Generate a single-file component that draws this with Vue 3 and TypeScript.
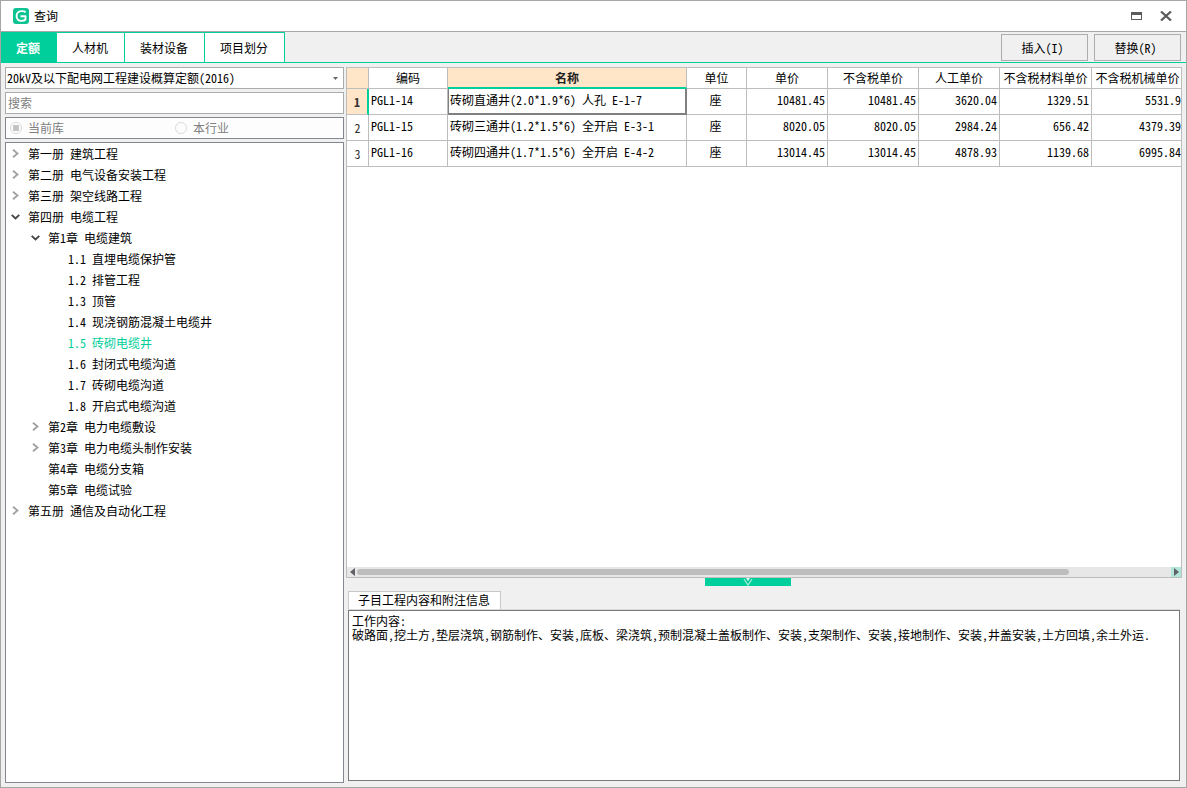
<script setup lang="ts">
import { ref } from 'vue'

interface TreeNode {
  label: string
  level: number
  state: 'open' | 'closed' | 'leaf'
}

const tabs = ['定额', '人材机', '装材设备', '项目划分']
const activeTab = ref('定额')
const library = ref('2016')
const keyword = ref('')
const scope = ref('current')
const selectedNode = ref('1.5 砖砌电缆井')

const nodes: TreeNode[] = [
  { label: '第一册 建筑工程', level: 0, state: 'closed' },
  { label: '第二册 电气设备安装工程', level: 0, state: 'closed' },
  { label: '第三册 架空线路工程', level: 0, state: 'closed' },
  { label: '第四册 电缆工程', level: 0, state: 'open' },
  { label: '第1章 电缆建筑', level: 1, state: 'open' },
  { label: '1.1 直埋电缆保护管', level: 2, state: 'leaf' },
  { label: '1.2 排管工程', level: 2, state: 'leaf' },
  { label: '1.3 顶管', level: 2, state: 'leaf' },
  { label: '1.4 现浇钢筋混凝土电缆井', level: 2, state: 'leaf' },
  { label: '1.5 砖砌电缆井', level: 2, state: 'leaf' },
  { label: '1.6 封闭式电缆沟道', level: 2, state: 'leaf' },
  { label: '1.7 砖砌电缆沟道', level: 2, state: 'leaf' },
  { label: '1.8 开启式电缆沟道', level: 2, state: 'leaf' },
  { label: '第2章 电力电缆敷设', level: 1, state: 'closed' },
  { label: '第3章 电力电缆头制作安装', level: 1, state: 'closed' },
  { label: '第4章 电缆分支箱', level: 1, state: 'leaf' },
  { label: '第5章 电缆试验', level: 1, state: 'leaf' },
  { label: '第五册 通信及自动化工程', level: 0, state: 'closed' },
]

const columns = ['编码', '名称', '单位', '单价', '不含税单价', '人工单价', '不含税材料单价', '不含税机械单价']

const rows = [
  { code: 'PGL1-14', name: '砖砌直通井(2.0*1.9*6) 人孔 E-1-7', unit: '座', prices: ['10481.45', '10481.45', '3620.04', '1329.51', '5531.9'] },
  { code: 'PGL1-15', name: '砖砌三通井(1.2*1.5*6) 全开启 E-3-1', unit: '座', prices: ['8020.05', '8020.05', '2984.24', '656.42', '4379.39'] },
  { code: 'PGL1-16', name: '砖砌四通井(1.7*1.5*6) 全开启 E-4-2', unit: '座', prices: ['13014.45', '13014.45', '4878.93', '1139.68', '6995.84'] },
]
const selectedRow = ref(0)

const notes = ref(
  '工作内容:\n破路面,挖土方,垫层浇筑,钢筋制作、安装,底板、梁浇筑,预制混凝土盖板制作、安装,支架制作、安装,接地制作、安装,井盖安装,土方回填,余土外运.',
)
</script>

<template>
  <div class="window">
    <header class="titlebar">
      <svg class="logo" viewBox="0 0 16 16" aria-hidden="true">
        <rect width="16" height="16" rx="3" fill="#0cc391" />
        <path d="M12.600 4.300C11.500 3.300 10 3 8.500 3.100C5.500 3.300 3.600 5.300 3.600 8C3.600 10.800 5.600 12.800 8.500 12.900C10.300 12.900 11.600 12.500 12.500 11.500V8.200H7.500" fill="none" stroke="#fff" stroke-width="1.900" stroke-linejoin="round" />
      </svg>
      <h1>查询</h1>
      <button class="win-btn" type="button" aria-label="最大化">
        <svg width="11" height="8" viewBox="0 0 11 8" shape-rendering="crispEdges"><path d="M0 0H11V8H0ZM1 3V7H10V3Z" fill="#5a5a5a" fill-rule="evenodd" /></svg>
      </button>
      <button class="win-btn" type="button" aria-label="关闭">
        <svg width="12" height="10" viewBox="0 0 12 10"><path d="M1 .5L11 9.500M11 .5L1 9.500" stroke="#5a5a5a" stroke-width="2.200" /></svg>
      </button>
    </header>

    <div class="toolbar">
      <nav class="tabs">
        <button v-for="tab in tabs" :key="tab" type="button" class="tab" :class="{ active: tab === activeTab }" @click="activeTab = tab">{{ tab }}</button>
      </nav>
      <div class="actions">
        <button type="button" class="action">插入(I)</button>
        <button type="button" class="action">替换(R)</button>
      </div>
    </div>

    <main class="content">
      <aside class="side">
        <div class="combo">
          <select v-model="library" aria-label="定额库">
            <option value="2016">20kV及以下配电网工程建设概算定额(2016)</option>
          </select>
          <svg class="combo-arrow" width="5" height="3" viewBox="0 0 5 3" aria-hidden="true"><path d="M0 0H5L2.500 3Z" fill="#666" /></svg>
        </div>
        <input v-model="keyword" class="search" type="text" placeholder="搜索" aria-label="搜索" />
        <div class="scope" role="radiogroup" aria-label="范围">
          <label><input v-model="scope" type="radio" name="scope" value="current" />当前库</label>
          <label><input v-model="scope" type="radio" name="scope" value="industry" />本行业</label>
        </div>
        <ul class="tree">
          <li v-for="node in nodes" :key="node.label">
            <button type="button" class="node" :class="['level-' + node.level, { selected: node.label === selectedNode }]" @click="selectedNode = node.label">
              <span class="toggle">
                <svg v-if="node.state === 'closed'" width="7" height="9" viewBox="0 0 7 9"><path d="M1 .8L5.500 4.500L1 8.200" fill="none" stroke="#a0a0a0" stroke-width="1.8" /></svg>
                <svg v-else-if="node.state === 'open'" width="9" height="6" viewBox="0 0 9 6"><path d="M.7 .8L4.500 4.500L8.300 .8" fill="none" stroke="#444" stroke-width="1.8" /></svg>
              </span>
              <span>{{ node.label }}</span>
            </button>
          </li>
        </ul>
      </aside>

      <section class="main">
        <div class="grid">
          <div class="grid-view">
            <table>
              <colgroup>
                <col class="w-index" /><col class="w-code" /><col class="w-name" /><col class="w-unit" />
                <col class="w-price" /><col class="w-net" /><col class="w-labor" /><col class="w-material" /><col />
              </colgroup>
              <thead>
                <tr>
                  <th class="mark"></th>
                  <th v-for="col in columns" :key="col" :class="{ current: col === '名称' }">{{ col }}</th>
                </tr>
              </thead>
              <tbody>
                <tr v-for="(row, i) in rows" :key="row.code" :class="{ chosen: i === selectedRow }" @click="selectedRow = i">
                  <th class="index" scope="row">{{ i + 1 }}</th>
                  <td>{{ row.code }}</td>
                  <td class="name">{{ row.name }}</td>
                  <td class="unit">{{ row.unit }}</td>
                  <td v-for="(price, p) in row.prices" :key="p" class="num">{{ price }}</td>
                </tr>
              </tbody>
            </table>
          </div>
          <div class="hscroll">
            <button type="button" class="arrow" aria-label="向左滚动">
              <svg width="5" height="8" viewBox="0 0 5 8"><path d="M5 0V8L0 4Z" fill="#606068" /></svg>
            </button>
            <div class="track"><div class="thumb"></div></div>
            <button type="button" class="arrow lit" aria-label="向右滚动">
              <svg width="5" height="8" viewBox="0 0 5 8"><path d="M0 0V8L5 4Z" fill="#606068" /></svg>
            </button>
          </div>
        </div>

        <button type="button" class="collapse" aria-label="折叠">
          <svg width="10" height="8" viewBox="0 0 10 8"><path d="M1 1L5 7L9 1" fill="none" stroke="#a5ecd8" stroke-width="1.300" /><path d="M3 0H7L5 3Z" fill="#e8fbf5" /></svg>
        </button>

        <div class="notes">
          <div class="notes-tabs"><button type="button" class="notes-tab">子目工程内容和附注信息</button></div>
          <textarea v-model="notes" aria-label="子目工程内容和附注信息" spellcheck="false"></textarea>
        </div>
      </section>
    </main>
  </div>
</template>

<style>
body {
  background: #f0f0f0;
}
</style>

<style scoped>
.window,
.window * {
  box-sizing: border-box;
}

.window {
  display: flex;
  flex-direction: column;
  min-height: 100vh;
  border: 1px solid #a6a6a6;
  background: #f0f0f0;
  color: #000;
  font: 12px/16px "Noto Sans CJK SC", "Liberation Sans", sans-serif;
  font-feature-settings: "hwid";
}

button,
input,
select,
textarea {
  margin: 0;
  padding: 0;
  border: 0;
  border-radius: 0;
  background: none;
  color: inherit;
  font: inherit;
  font-feature-settings: inherit;
  outline: none;
}

.titlebar {
  display: flex;
  align-items: center;
  height: 31px;
  padding: 0 10px 0 12px;
  border-bottom: 1px solid #a6a6a6;
  background: #fff;
}

.logo {
  width: 16px;
  height: 16px;
  margin-right: 5px;
}

h1 {
  flex: 1;
  margin: 0;
  font-size: 12px;
  font-weight: 400;
}

.win-btn {
  display: flex;
  align-items: center;
  justify-content: center;
  width: 29px;
  height: 24px;
}

.win-btn:last-child {
  margin-right: -4px;
}

.toolbar {
  display: flex;
  justify-content: space-between;
  height: 31px;
  border-bottom: 1px solid #00ce9b;
}

.tabs {
  display: flex;
}

.tab {
  padding: 0 16px 0 15px;
  border-top: 1px solid #00ce9b;
  border-right: 1px solid #00ce9b;
  background: #fff;
}

.tab.active {
  background: #00ce9b;
  color: #fff;
  font-weight: 700;
}

.actions {
  display: flex;
  gap: 6px;
  padding: 2px 5px 1px 0;
}

.action {
  width: 87px;
  padding-right: 4px;
  border: 1px solid #adadad;
}

.content {
  display: grid;
  flex: 1;
  grid-template-columns: 339px minmax(0, 1fr);
  gap: 2px;
  padding: 4px;
}

.side {
  display: flex;
  flex-direction: column;
  gap: 3px;
}

.combo {
  position: relative;
  height: 22px;
  border: 1px solid #ababab;
  background: #fff;
}

.combo select {
  width: 100%;
  height: 20px;
  padding: 0 16px 0 1px;
  appearance: none;
}

.combo-arrow {
  position: absolute;
  top: 9px;
  right: 5px;
  pointer-events: none;
}

.search {
  height: 22px;
  padding: 0 2px 2px;
  border: 1px solid #ababab;
  background: #fff;
}

.search::placeholder {
  color: #808080;
  opacity: 1;
}

.scope {
  display: grid;
  grid-template-columns: 165px 1fr;
  height: 22px;
  padding-left: 4px;
  border: 1px solid #828790;
  background: #fdfdfd;
  color: #808080;
}

.scope label {
  display: flex;
  align-items: center;
  gap: 6px;
}

.scope input {
  display: flex;
  align-items: center;
  justify-content: center;
  width: 12px;
  height: 12px;
  appearance: none;
  border: 1px solid #dadada;
  border-radius: 50%;
  background: #fdfdfd;
}

.scope input:checked::before {
  width: 6px;
  height: 6px;
  border-radius: 1px;
  background: #c4c4c4;
  content: "";
}

.tree {
  flex: 1;
  margin: 0;
  padding: 0;
  border: 1px solid #828790;
  background: #fff;
  list-style: none;
}

.node {
  display: flex;
  align-items: center;
  width: 100%;
  height: 21px;
  text-align: left;
}

.level-1 {
  padding-left: 20px;
}

.level-2 {
  padding-left: 40px;
}

.toggle {
  display: flex;
  justify-content: center;
  width: 19px;
  margin-right: 3px;
}

.selected {
  color: #00ce9b;
}

.main {
  display: flex;
  flex-direction: column;
  min-width: 0;
}

.grid {
  display: flex;
  flex: 1;
  flex-direction: column;
  border: 1px solid #bdbdbd;
  background: #fff;
}

.grid-view {
  flex: 1;
}

table {
  width: 100%;
  border-collapse: separate;
  border-spacing: 0;
  table-layout: fixed;
}

.w-index { width: 22px; }
.w-code { width: 79px; }
.w-name { width: 239px; }
.w-unit { width: 60px; }
.w-price { width: 81px; }
.w-net { width: 91px; }
.w-labor { width: 81px; }
.w-material { width: 92px; }

th,
td {
  padding: 0 2px;
  border-right: 1px solid #bdbdbd;
  border-bottom: 1px solid #bdbdbd;
  font-weight: 400;
  white-space: nowrap;
}

thead th {
  height: 21px;
}

tbody th {
  height: 26px;
}

tbody td {
  height: 26px;
  padding: 0 2px 3px;
}

th:last-child,
td:last-child {
  padding-right: 0;
  border-right: 0;
}

.mark {
  background: #ffe6c8;
}

.current {
  border-bottom: 2px solid #00ce9b;
  background: #ffe6c8;
  color: #222;
  font-weight: 700;
}

.index {
  color: #333;
}

.chosen .index {
  border-right: 2px solid #00ce9b;
  background: #ffe6c8;
  font-weight: 700;
}

.chosen .name {
  padding: 0 1px 2px;
  border: solid #808080;
  border-width: 0 2px 2px 1px;
}

tbody .unit {
  padding-right: 4px;
  text-align: center;
}

.num {
  text-align: right;
}

.hscroll {
  display: flex;
  height: 10px;
  background: #e7e7e7;
}

.arrow {
  display: flex;
  align-items: center;
  justify-content: center;
  width: 10px;
}

.lit {
  background: #b2e6d9;
}

.track {
  flex: 1;
  padding: 2px 0;
}

.thumb {
  width: 87.5%;
  height: 6px;
  border-radius: 3px;
  background: #bdbdbd;
}

.collapse {
  display: flex;
  justify-content: center;
  width: 86px;
  height: 8px;
  margin-left: 43%;
  background: #00ce9b;
}

.notes {
  display: flex;
  flex-direction: column;
  padding: 5px 2px 2px;
}

.notes-tabs {
  display: flex;
  border-bottom: 1px solid #d9d9d9;
}

.notes-tab {
  height: 18px;
  padding: 0 10px 2px 9px;
  border: solid #c8c8c8;
  border-width: 1px 1px 0;
  background: #fff;
}

textarea {
  height: 171px;
  padding: 3px;
  border: 1px solid #7a7a7a;
  background: #fff;
  line-height: 14px;
  resize: none;
}
</style>
